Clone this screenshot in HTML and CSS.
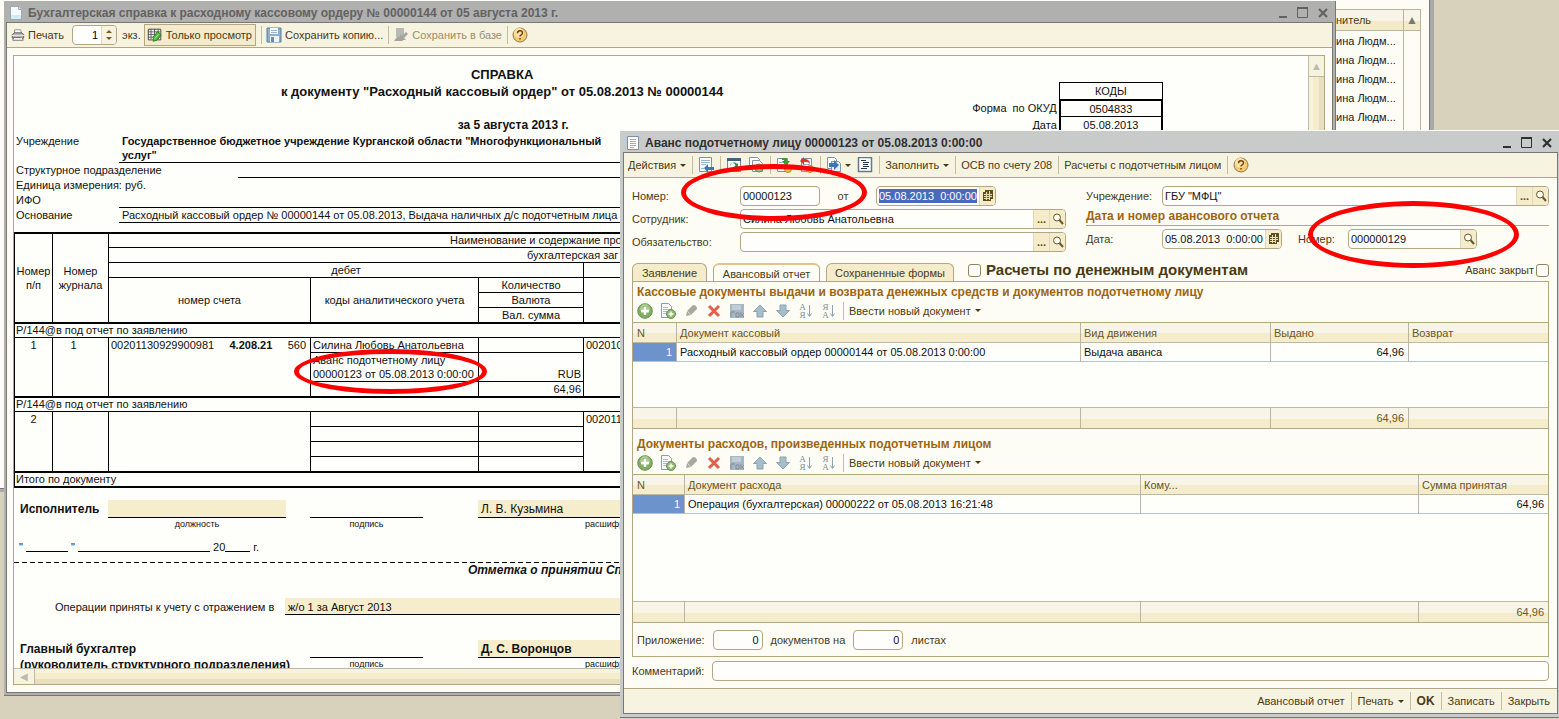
FILE: index.html
```html
<!DOCTYPE html>
<html lang="ru">
<head>
<meta charset="utf-8">
<title>Аванс подотчетному лицу</title>
<link rel="stylesheet" href="styles.css">
</head>
<body>
<svg class="defs" aria-hidden="true">
  <symbol id="i-max" viewBox="0 0 12 12"><path d="M.5 1.5h10v9H.5zM.5 1h10" fill="none" stroke="currentColor"/><path d="M0 0h11v2H0z" fill="currentColor"/></symbol>
  <symbol id="i-min" viewBox="0 0 12 12"><path d="M2 9h8v2H2z" fill="currentColor"/></symbol>
  <symbol id="i-close" viewBox="0 0 12 12"><path d="M2 2l8 8M10 2l-8 8" stroke="currentColor" stroke-width="2.2"/></symbol>
  <symbol id="i-page" viewBox="0 0 14 14"><path d="M1.500.5h8l3 3v10h-11z" fill="#f6fbff" stroke="#9aa9b8"/><path d="M9.500.5v3h3" fill="#dfe9f2" stroke="#9aa9b8"/><path d="M2 9h10v4H2z" fill="#d4eaf5"/></symbol>
  <symbol id="i-doc" viewBox="0 0 14 14"><path d="M1.500.5h11v13h-11z" fill="#fff" stroke="#7d8fa0"/><path d="M4 3.500h6M4 5.500h6M4 7.500h6M4 9.500h6M4 11.500h4" stroke="#8fb0cc"/></symbol>
  <symbol id="i-print" viewBox="0 0 16 16"><path d="M4 6V2h7l1 4" fill="#fff" stroke="#8a8a8a"/><path d="M1.500 7.500l2-2h9l2 2v4h-13z" fill="#b4b4b4" stroke="#555"/><path d="M1 8h14v1H1z" fill="#eee"/><path d="M3 11h10l1 3H2z" fill="#fff" stroke="#666"/><path d="M11 10h2v1h-2z" fill="#f0a020"/></symbol>
  <symbol id="i-grid" viewBox="0 0 18 16"><path d="M1.500 1.500h14v12h-14z" fill="#fff" stroke="#333"/><path d="M1 4.500h14M1 7.500h14M1 10.500h14M4.500 1v12M8.500 1v12M12.500 1v12" stroke="#555"/><path d="M7 10l5-6 4 4-5 6-4 1z" fill="#55b53c" stroke="#277a1c"/><path d="M8 13l5-6" stroke="#b5e69a"/></symbol>
  <symbol id="i-save" viewBox="0 0 16 16"><path d="M1 1h14v14H1z" fill="#8fb0cc" stroke="#5a7f9f"/><path d="M4 1h8v6H4z" fill="#f7f9fb"/><path d="M5 3.500h6M5 5.500h6" stroke="#9bb3c6"/><path d="M4 9h9v6H4z" fill="#eef3f6"/><path d="M5 10h3v5H5z" fill="#6f8ba3"/></symbol>
  <symbol id="i-base" viewBox="0 0 16 16"><path d="M3 1h8v9H3z" fill="#b8b8b4"/><path d="M1 14l3-4h4l2 4zM7 13V7l2 2 4-4 2 2-4 4 2 2z" fill="#a5a5a0"/></symbol>
  <symbol id="i-help" viewBox="0 0 16 16"><circle cx="8" cy="8" r="7" fill="#f6c96e" stroke="#8f7b52"/><circle cx="7" cy="6" r="5" fill="#fae1a6"/><path d="M5.500 6.200c0-3.200 5-3 5-.2 0 2-2.500 1.800-2.500 3.500M8 11v1.600" fill="none" stroke="#70450d" stroke-width="1.500"/></symbol>
  <symbol id="i-list" viewBox="0 0 16 16"><path d="M1.500.5h12v14h-12z" fill="#fff" stroke="#7d93a8"/><path d="M3 3.500h9M3 5.500h9M3 7.500h5M3 11.500h3" stroke="#9ab4c9"/><path d="M6 11l4-4v3h6v3h-6v3z" fill="#3d78b5"/></symbol>
  <symbol id="i-refresh" viewBox="0 0 16 16"><path d="M1.500 1.500h13v13h-13z" fill="#f4f8fa" stroke="#6f8497"/><path d="M1 1h14v3H1z" fill="#46637c"/><path d="M4 9a4 4 0 0 1 7-2l1-1v4H8l1.500-1.500A2.500 2.500 0 0 0 4 9z" fill="#3b8a3a"/></symbol>
  <symbol id="i-copy" viewBox="0 0 16 16"><path d="M1.500.5h8l2 2v10h-10z" fill="#fff" stroke="#8495a5"/><path d="M4.500 3.500h7l3 3v8h-10z" fill="#f1f6f9" stroke="#8495a5"/><circle cx="11" cy="11" r="4" fill="#9cc384" stroke="#64894d"/><path d="M11 9v4M9 11h4" stroke="#fff"/></symbol>
  <symbol id="i-post" viewBox="0 0 16 16"><path d="M1.500 1.500h10v13h-10z" fill="#fff" stroke="#7d93a8"/><path d="M3 5.500h7M3 7.500h7M3 9.500h4M3 11.500h4" stroke="#9ab4c9"/><path d="M6 1h5v3h3l-4 5-4-5h2V3H6z" fill="#3c9a35"/><circle cx="12" cy="12" r="3.500" fill="#f0bf48" stroke="#b98a27"/></symbol>
  <symbol id="i-unpost" viewBox="0 0 16 16"><path d="M3.500 1.500h10v13h-10z" fill="#fff" stroke="#7d93a8"/><path d="M5 7.500h7M5 9.500h4M5 11.500h4" stroke="#9ab4c9"/><path d="M2 4l4-4v2c4 0 6 2 6 5-1-2-3-2-6-2v3z" fill="#dd3426"/><circle cx="12" cy="12" r="3.500" fill="#f0bf48" stroke="#b98a27"/></symbol>
  <symbol id="i-go" viewBox="0 0 16 16"><path d="M1.500.5h7l2 2v9h-9z" fill="#fff" stroke="#7d93a8"/><path d="M5.500 4.500h7l2 2v8h-9z" fill="#e9f2f8" stroke="#7d93a8"/><path d="M3 6h5V3l5 5-5 5v-3H3z" fill="#3d78b5"/></symbol>
  <symbol id="i-struct" viewBox="0 0 16 16"><path d="M1.500.5h13v14h-13z" fill="#fff" stroke="#62788b" stroke-width="1.500"/><path d="M4 3.500h5M6 5.500h6M6 7.500h5M6 9.500h6M4 11.500h6" stroke="#26384a" stroke-width="1.200"/></symbol>
  <symbol id="i-add" viewBox="0 0 16 16"><circle cx="8" cy="8" r="7.300" fill="#7fae5e" stroke="#6f8e5c"/><circle cx="8" cy="6" r="5" fill="#a8ca8b"/><path d="M8 4v8M4 8h8" stroke="#fff" stroke-width="2.400"/></symbol>
  <symbol id="i-addcopy" viewBox="0 0 16 16"><path d="M1.500.5h7l3 3v11h-10z" fill="#fff" stroke="#8d9cab"/><path d="M3 4.500h5M3 6.500h7M3 8.500h4M3 10.500h3" stroke="#a9bccc"/><circle cx="11" cy="11" r="4.500" fill="#8dba6c" stroke="#6f8e5c"/><path d="M11 8.500v5M8.500 11h5" stroke="#fff" stroke-width="1.600"/></symbol>
  <symbol id="i-pen" viewBox="0 0 16 16"><path d="M3 13l1-5 6-6q4 0 4 4l-6 6z" fill="#aaa99c"/><path d="M4 8l4 4" stroke="#d8d6c8"/></symbol>
  <symbol id="i-del" viewBox="0 0 16 16"><path d="M3 3l10 10M13 3L3 13" stroke="#e0604c" stroke-width="3"/></symbol>
  <symbol id="i-end" viewBox="0 0 16 16"><path d="M1 1h14v14H1z" fill="#a7b8c4"/><path d="M3 2h9v5H3z" fill="#c0cdd6"/><path d="M2 14V9h4M7 14v-4h3v4zM12 9v5M15 10l-2 2 2 2" fill="none" stroke="#7f8d98"/></symbol>
  <symbol id="i-up" viewBox="0 0 16 16"><path d="M8 2l6.500 6.500H11V14H5V8.500H1.500z" fill="#a6bdca" stroke="#8ca3b1"/></symbol>
  <symbol id="i-down" viewBox="0 0 16 16"><path d="M8 14l6.500-6.500H11V2H5v5.500H1.500z" fill="#a6bdca" stroke="#8ca3b1"/></symbol>
  <symbol id="i-sortdown" viewBox="0 0 5 16"><path d="M2.500 2v11M.5 10.500l2 3 2-3" fill="none" stroke="#8ca3b1"/></symbol>
  <symbol id="i-glass" viewBox="0 0 12 12"><circle cx="5" cy="4.500" r="3.500" fill="#fffdf0" stroke="#6a5830"/><path d="M7.500 7l3.500 4" stroke="#6a5830" stroke-width="2"/></symbol>
  <symbol id="i-cal" viewBox="0 0 12 12"><path d="M3 0h8v9H9v2H1V2h2z" fill="#5d4c1e"/><path d="M2 4.500h8M2 6.500h8M2 8.500h6M4.500 2v8M7.500 1v9" stroke="#e9dfb4"/></symbol>
</svg>

<div class="desktop">

  <section class="list-window">
    <table class="people">
      <thead><tr><th>нитель</th><th class="people-scroll">▲</th></tr></thead>
      <tbody>
        <tr><td>ина Людм...</td><td></td></tr>
        <tr><td>ина Людм...</td><td></td></tr>
        <tr><td>ина Людм...</td><td></td></tr>
        <tr><td>ина Людм...</td><td></td></tr>
        <tr><td>ина Людм...</td><td></td></tr>
        <tr class="filler"><td></td><td></td></tr>
      </tbody>
    </table>
  </section>

  <section class="window report">
    <header class="titlebar">
      <svg class="ic14"><use href="#i-page"/></svg>
      <h1>Бухгалтерская справка к расходному кассовому ордеру № 00000144 от 05 августа 2013 г.</h1>
      <button aria-label="Свернуть"><svg class="ic12"><use href="#i-min"/></svg></button>
      <button aria-label="Развернуть"><svg class="ic12"><use href="#i-max"/></svg></button>
      <button aria-label="Закрыть"><svg class="ic12"><use href="#i-close"/></svg></button>
    </header>
    <div class="frame">
      <div class="toolbar report-bar">
        <button><svg class="ic14"><use href="#i-print"/></svg>Печать</button>
        <span class="spin"><input id="copies" value="1" aria-label="Количество экземпляров"><span class="arrows"><i class="tri-up"></i><i class="tri-down"></i></span></span>
        <label for="copies">экз.</label>
        <button class="pressed"><svg class="ic16"><use href="#i-grid"/></svg>Только просмотр</button>
        <i class="sep"></i>
        <button><svg class="ic16"><use href="#i-save"/></svg>Сохранить копию...</button>
        <i class="sep"></i>
        <button class="off"><svg class="ic16"><use href="#i-base"/></svg>Сохранить в базе</button>
        <i class="sep"></i>
        <button aria-label="Справка"><svg class="ic16"><use href="#i-help"/></svg></button>
      </div>
      <div class="viewer">
        <article class="sheet">
          <div class="sheet-head">
            <div class="sheet-title">
              <p>СПРАВКА</p>
              <p>к документу "Расходный кассовый ордер" от 05.08.2013 № 00000144</p>
              <p class="date-line">за 5 августа 2013 г.</p>
            </div>
            <table class="codes">
              <tr><td></td><td class="code top">КОДЫ</td></tr>
              <tr><td>Форма&nbsp; по ОКУД</td><td class="code first">0504833</td></tr>
              <tr><td>Дата</td><td class="code">05.08.2013</td></tr>
            </table>
          </div>
          <dl class="facts">
            <dt>Учреждение</dt><dd class="org line">Государственное бюджетное учреждение Курганской области "Многофункциональный<br>услуг"</dd>
            <dt class="wide">Структурное подразделение</dt><dd class="short line"></dd>
            <dt class="wide">Единица измерения: руб.</dt><dd class="short"></dd>
            <dt>ИФО</dt><dd class="line"></dd>
            <dt>Основание</dt><dd class="line">Расходный кассовый ордер № 00000144 от 05.08.2013, Выдача наличных д/с подотчетным лица</dd>
          </dl>
          <table class="entries">
            <colgroup><col class="e1"><col class="e2"><col class="e3"><col class="e4"><col class="e5"><col></colgroup>
            <tbody>
            <tr class="thick center"><td rowspan="6">Номер<br>п/п</td><td rowspan="6">Номер<br>журнала</td><td colspan="4" class="caption-a">Наименование и содержание про</td></tr>
            <tr><td colspan="4" class="caption-b">бухгалтерская заг</td></tr>
            <tr class="center"><td colspan="3">дебет</td><td></td></tr>
            <tr class="center"><td rowspan="3">номер счета</td><td rowspan="3">коды аналитического учета</td><td>Количество</td><td rowspan="3"></td></tr>
            <tr class="center"><td>Валюта</td></tr>
            <tr class="center"><td>Вал. сумма</td></tr>
            <tr class="thick"><td colspan="6">Р/144@в под отчет по заявлению</td></tr>
            <tr class="top"><td rowspan="3" class="mid">1</td><td rowspan="3" class="mid journal">1</td><td rowspan="3"><div class="account"><span>00201130929900981</span><b>4.208.21</b><span>560</span></div></td><td>Силина Любовь Анатольевна</td><td></td><td rowspan="3">002010</td></tr>
            <tr class="double"><td>Аванс подотчетному лицу<br>00000123 от 05.08.2013 0:00:00</td><td class="num">RUB</td></tr>
            <tr><td></td><td class="num">64,96</td></tr>
            <tr class="thick"><td colspan="6">Р/144@в под отчет по заявлению</td></tr>
            <tr class="top"><td rowspan="4" class="mid">2</td><td rowspan="4"></td><td rowspan="4"></td><td></td><td></td><td rowspan="4">002011</td></tr>
            <tr><td></td><td></td></tr>
            <tr><td></td><td></td></tr>
            <tr><td></td><td></td></tr>
            <tr class="thick last"><td colspan="6">Итого по документу</td></tr>
            </tbody>
          </table>
          <div class="sign">
            <strong>Исполнитель</strong><span class="fill post"></span><span class="rule"></span><span class="fill name">Л. В. Кузьмина</span>
            <small class="c-post">должность</small><small class="c-sign">подпись</small><small class="c-name">расшифр</small>
          </div>
          <p class="date-blank">"&nbsp;<span class="blank day"></span>&nbsp;"&nbsp;<span class="blank month"></span>&nbsp;20<span class="blank year"></span>&nbsp;г.</p>
          <p class="mark">Отметка о принятии Сп</p>
          <div class="accepted"><span>Операции приняты к учету с отражением в</span><span class="fill">ж/о 1 за Август 2013</span></div>
          <div class="sign chief">
            <strong class="span2">Главный бухгалтер</strong><span class="rule"></span><span class="fill name"><b>Д. С. Воронцов</b></span>
            <strong class="span2 unit">(руководитель структурного подразделения)</strong><small class="c-sign">подпись</small><small class="c-name">расшифр</small>
          </div>
        </article>
        <div class="vscroll"><span>▲</span></div>
        <div class="hscroll"><span>◀</span></div>
      </div>
    </div>
  </section>

  <section class="window advance">
    <header class="titlebar">
      <svg class="ic14"><use href="#i-doc"/></svg>
      <h2>Аванс подотчетному лицу 00000123 от 05.08.2013 0:00:00</h2>
      <button aria-label="Свернуть"><svg class="ic12"><use href="#i-min"/></svg></button>
      <button aria-label="Развернуть"><svg class="ic12"><use href="#i-max"/></svg></button>
      <button aria-label="Закрыть"><svg class="ic12"><use href="#i-close"/></svg></button>
    </header>
    <form class="frame">
      <div class="toolbar">
        <button type="button">Действия<i class="caret"></i></button>
        <i class="sep"></i>
        <button type="button" aria-label="Список"><svg class="ic16"><use href="#i-list"/></svg></button>
        <i class="sep"></i>
        <button type="button" aria-label="Обновить"><svg class="ic16"><use href="#i-refresh"/></svg></button>
        <button type="button" aria-label="Скопировать"><svg class="ic16"><use href="#i-copy"/></svg></button>
        <i class="sep"></i>
        <button type="button" aria-label="Провести"><svg class="ic16"><use href="#i-post"/></svg></button>
        <button type="button" aria-label="Отмена проведения"><svg class="ic16"><use href="#i-unpost"/></svg></button>
        <i class="sep"></i>
        <button type="button" aria-label="Перейти"><svg class="ic16"><use href="#i-go"/></svg><i class="caret tight"></i></button>
        <button type="button" aria-label="Структура"><svg class="ic16"><use href="#i-struct"/></svg></button>
        <i class="sep"></i>
        <button type="button">Заполнить<i class="caret"></i></button>
        <i class="sep"></i>
        <button type="button">ОСВ по счету 208</button>
        <i class="sep"></i>
        <button type="button">Расчеты с подотчетным лицом</button>
        <i class="sep"></i>
        <button type="button" aria-label="Справка"><svg class="ic16"><use href="#i-help"/></svg></button>
      </div>
      <div class="content">
        <div class="form">
          <div class="side-left">
            <label for="num">Номер:</label>
            <div class="line-fields">
              <span class="field number"><input id="num" value="00000123"></span>
              <label for="docdate">от</label>
              <span class="field date"><input id="docdate" class="selected" value="05.08.2013&nbsp; 0:00:00"><button type="button" aria-label="Календарь"><svg class="ic12"><use href="#i-cal"/></svg></button></span>
            </div>
            <label for="emp">Сотрудник:</label>
            <span class="field"><input id="emp" value="Силина Любовь Анатольевна"><button type="button">...</button><button type="button" aria-label="Открыть"><svg class="ic12"><use href="#i-glass"/></svg></button></span>
            <label for="duty">Обязательство:</label>
            <span class="field"><input id="duty"><button type="button">...</button><button type="button" aria-label="Открыть"><svg class="ic12"><use href="#i-glass"/></svg></button></span>
          </div>
          <div class="side-right">
            <label for="org">Учреждение:</label>
            <span class="field"><input id="org" value='ГБУ "МФЦ"'><button type="button">...</button><button type="button" aria-label="Открыть"><svg class="ic12"><use href="#i-glass"/></svg></button></span>
            <h3>Дата и номер авансового отчета</h3>
            <label for="repdate">Дата:</label>
            <div class="line-fields">
              <span class="field date"><input id="repdate" value="05.08.2013&nbsp; 0:00:00"><button type="button" aria-label="Календарь"><svg class="ic12"><use href="#i-cal"/></svg></button></span>
              <label for="repnum" class="rep-label">Номер:</label>
              <span class="field repnum"><input id="repnum" value="000000129"><button type="button" aria-label="Открыть"><svg class="ic12"><use href="#i-glass"/></svg></button></span>
            </div>
          </div>
        </div>
        <div class="tabs">
          <button type="button" class="tab t1">Заявление</button>
          <button type="button" class="tab t2 active">Авансовый отчет</button>
          <button type="button" class="tab t3">Сохраненные формы</button>
          <label class="money"><input type="checkbox">Расчеты по денежным документам</label>
          <label class="closed">Аванс закрыт<input type="checkbox"></label>
        </div>
        <div class="panel">
          <h3>Кассовые документы выдачи и возврата денежных средств и документов подотчетному лицу</h3>
          <div class="gridbar">
            <button type="button" aria-label="Добавить"><svg class="ic16"><use href="#i-add"/></svg></button>
            <button type="button" aria-label="Скопировать"><svg class="ic16"><use href="#i-addcopy"/></svg></button>
            <button type="button" aria-label="Изменить"><svg class="ic16"><use href="#i-pen"/></svg></button>
            <button type="button" aria-label="Удалить"><svg class="ic16"><use href="#i-del"/></svg></button>
            <button type="button" aria-label="Закончить"><svg class="ic16"><use href="#i-end"/></svg></button>
            <button type="button" aria-label="Вверх"><svg class="ic16"><use href="#i-up"/></svg></button>
            <button type="button" aria-label="Вниз"><svg class="ic16"><use href="#i-down"/></svg></button>
            <button type="button" class="sort"><span>А<br>Я</span><svg class="ic5"><use href="#i-sortdown"/></svg></button>
            <button type="button" class="sort"><span>Я<br>А</span><svg class="ic5"><use href="#i-sortdown"/></svg></button>
            <i class="sep"></i>
            <button type="button" class="enter">Ввести новый документ<i class="caret"></i></button>
          </div>
          <table class="data cash">
            <colgroup><col class="a1"><col><col class="a3"><col class="a4"><col class="a5"></colgroup>
            <thead><tr><th>N</th><th>Документ кассовый</th><th>Вид движения</th><th>Выдано</th><th>Возврат</th></tr></thead>
            <tbody>
              <tr><td class="cur">1</td><td>Расходный кассовый ордер 00000144 от 05.08.2013 0:00:00</td><td>Выдача аванса</td><td class="num">64,96</td><td></td></tr>
              <tr class="filler"><td colspan="5"></td></tr>
            </tbody>
            <tfoot><tr><td></td><td></td><td></td><td class="num">64,96</td><td></td></tr></tfoot>
          </table>
          <h3 class="second">Документы расходов, произведенных подотчетным лицом</h3>
          <div class="gridbar">
            <button type="button" aria-label="Добавить"><svg class="ic16"><use href="#i-add"/></svg></button>
            <button type="button" aria-label="Скопировать"><svg class="ic16"><use href="#i-addcopy"/></svg></button>
            <button type="button" aria-label="Изменить"><svg class="ic16"><use href="#i-pen"/></svg></button>
            <button type="button" aria-label="Удалить"><svg class="ic16"><use href="#i-del"/></svg></button>
            <button type="button" aria-label="Закончить"><svg class="ic16"><use href="#i-end"/></svg></button>
            <button type="button" aria-label="Вверх"><svg class="ic16"><use href="#i-up"/></svg></button>
            <button type="button" aria-label="Вниз"><svg class="ic16"><use href="#i-down"/></svg></button>
            <button type="button" class="sort"><span>А<br>Я</span><svg class="ic5"><use href="#i-sortdown"/></svg></button>
            <button type="button" class="sort"><span>Я<br>А</span><svg class="ic5"><use href="#i-sortdown"/></svg></button>
            <i class="sep"></i>
            <button type="button" class="enter">Ввести новый документ<i class="caret"></i></button>
          </div>
          <div class="grow">
            <table class="data spend">
              <colgroup><col class="b1"><col><col class="b3"><col class="b4"></colgroup>
              <thead><tr><th>N</th><th>Документ расхода</th><th>Кому...</th><th>Сумма принятая</th></tr></thead>
              <tbody>
                <tr><td class="cur">1</td><td>Операция (бухгалтерская) 00000222 от 05.08.2013 16:21:48</td><td></td><td class="num">64,96</td></tr>
                <tr class="filler"><td colspan="4"></td></tr>
              </tbody>
              <tfoot><tr><td></td><td></td><td></td><td class="num">64,96</td></tr></tfoot>
            </table>
          </div>
          <div class="attach">
            <label for="docs">Приложение:</label>
            <span class="field count"><input id="docs" value="0"></span>
            <label for="sheets">документов на</label>
            <span class="field count"><input id="sheets" value="0"></span>
            <span>листах</span>
          </div>
        </div>
        <div class="comment"><label for="note">Комментарий:</label><span class="field"><input id="note"></span></div>
      </div>
      <footer class="actions">
        <button type="button">Авансовый отчет</button><i class="sep"></i>
        <button type="button">Печать<i class="caret"></i></button><i class="sep"></i>
        <button type="submit" class="ok">OK</button><i class="sep"></i>
        <button type="button">Записать</button><i class="sep"></i>
        <button type="button">Закрыть</button>
      </footer>
    </form>
  </section>

  <div class="mark-ring ring-analytics"></div>
  <div class="mark-ring ring-number"></div>
  <div class="mark-ring ring-report"></div>
</div>
</body>
</html>
```
FILE: styles.css
```css
* { box-sizing: border-box; }
html, body { height: 100%; margin: 0; }
body { font: 11px/14px "Liberation Sans", Arial, sans-serif; color: #4a3a12; }
h1, h2, h3, p, dl, dd { margin: 0; }
button { font: inherit; color: inherit; border: 0; background: none; padding: 0; display: inline-flex; align-items: center; white-space: nowrap; }
input { font: inherit; }
.defs { display: none; }
.ic5 { width: 5px; height: 16px; }
.ic12 { width: 12px; height: 12px; }
.ic14 { width: 14px; height: 14px; }
.ic16 { width: 16px; height: 16px; }
svg { flex: none; display: block; }

.desktop { position: relative; height: 100%; overflow: hidden; background: #d8d2bc; }

/* List window behind */
.list-window { position: absolute; left: 0; top: 0; width: 1434px; height: 492px; background: #fdfdf6; border: solid #a9a9a7; border-width: 0 4px 3px 0; box-shadow: inset -1px -1px #777; padding: 9px 9px 0 1336px; }
.people { width: 100%; height: 100%; border-spacing: 0; table-layout: fixed; border: solid #b9b3a0; border-width: 1px 1px 0 0; }
.people th { height: 21px; padding: 0; text-align: left; font-weight: normal; background: linear-gradient(#f8f5e8 55%, #f3ebc8 55%); border-bottom: 1px solid #b9b3a0; }
.people th:last-child { width: 17px; text-align: center; color: #777; font-size: 12px; }
.people td { height: 19px; padding: 0; color: #222; }
.people th + th, .people td + td { border-left: 1px solid #b9b3a0; }
.people .filler td { height: auto; }

/* Window chrome */
.window { position: absolute; display: flex; flex-direction: column; }
.report { left: 4px; top: 1px; width: 1332px; bottom: 23px; background: #b0b0ae; border-right: 1px solid #777; border-bottom: 1px solid #777; padding: 0 2px 2px; }
.advance { left: 620px; right: 0; top: 130px; bottom: 2px; background: #c9cbca; border-top: 1px solid #fff; padding: 0 1px 3px 3px; box-shadow: 0 1px #777; }
.titlebar { display: flex; align-items: center; height: 21px; padding: 3px 4px 0 3px; gap: 8px; color: #626262; }
.advance .titlebar { color: #303030; padding: 3px 5px 0 3px; }
.titlebar h1, .titlebar h2 { flex: 1; font-size: 12px; line-height: 16px; font-weight: bold; white-space: nowrap; }
.titlebar svg { margin-right: 0; }
.titlebar > svg { margin-right: -3px; }
.frame { flex: 1; min-height: 0; display: flex; flex-direction: column; border: 1px solid #777; background: #fdfdf6; margin: 0; }
.toolbar { display: flex; align-items: center; height: 25px; flex: none; background: #f7f3e1; border-bottom: 1px solid #b3a683; padding: 0 4px; gap: 6px; }
.report-bar { gap: 5px; }
.report-bar button { gap: 3px; }
.sep { width: 1px; height: 18px; background: #c5bd9f; flex: none; margin-right: -1px; }
.caret { border: 3px solid transparent; border-top-color: currentColor; border-bottom: 0; margin-left: 4px; }
.caret.tight { margin-left: 3px; }
.report-bar .pressed { height: 22px; border: 1px solid #b3a683; background: #f3ebcb; padding: 0 3px 0 2px; }
.off { color: #9a8d66; }
.spin { display: flex; width: 45px; height: 20px; margin-left: 3px; border: 1px solid #b3a683; border-radius: 4px; background: #fff; overflow: hidden; }
.spin input { width: 28px; border: 0; padding: 0 3px 0 0; text-align: right; background: none; }
.spin + label { margin-right: -2px; }
.arrows { flex: 1; display: flex; flex-direction: column; gap: 4px; align-items: center; justify-content: center; background: #f7f3e1; border-left: 1px solid #e5dcb8; }
.tri-up, .tri-down { border: 3px solid transparent; }
.tri-up { border-top: 0; border-bottom-color: #7a5a18; }
.tri-down { border-bottom: 0; border-top-color: #7a5a18; }

/* Report viewer */
.viewer { flex: 1; min-height: 0; margin: 7px 7px 7px 6px; border: 1px solid #b3a683; display: grid; grid-template: minmax(0, 1fr) 16px / minmax(0, 1fr) 16px; background: #fff; }
.sheet { overflow: hidden; background: #fefefa; color: #111; }
.vscroll { border-left: 1px solid #c0b99f; background: linear-gradient(90deg, #f7f3e1 30%, #f4ecca 30% 70%, #e9dfc0 70%); }
.vscroll span, .hscroll span { display: grid; place-items: center; color: #bcb9ae; background: #f7f3e1; }
.vscroll span { height: 21px; border-bottom: 1px solid #c0b99f; }
.hscroll { border-top: 1px solid #c0b99f; background: linear-gradient(#f7f3e1 30%, #f4ecca 30% 70%, #e9dfc0 70%); }
.hscroll span { width: 21px; height: 15px; border-right: 1px solid #c0b99f; font-size: 10px; }
.sheet-head { display: flex; height: 78px; }
.sheet-title { width: 940px; margin-left: 20px; padding-top: 10px; text-align: center; font-size: 13px; line-height: 17px; font-weight: bold; }
.date-line { margin-top: 17px; padding-left: 22px; font-size: 12px; }
.codes { margin: 26px 145px 0 auto; border-spacing: 0; align-self: flex-start; }
.codes td { height: 17px; padding: 0 2px; text-align: right; line-height: 14px; white-space: nowrap; }
.codes .code { width: 105px; text-align: center; border: solid #000; border-width: 1px 2px 0; }
.codes .code.top { border-width: 1px 1px 0; }
.codes .code.first { border-top-width: 2px; }
.facts { display: grid; grid-template-columns: 105px 119px 1fr; }
.facts dt { padding-left: 2px; line-height: 14px; height: 15px; white-space: nowrap; }
.facts dt.wide { grid-column: span 2; }
.facts dd { grid-column: span 2; padding-left: 3px; line-height: 14px; height: 15px; white-space: nowrap; }
.facts dd.short { grid-column: span 1; }
.facts dd.org { height: 29px; font-weight: bold; }
.facts .line { border-bottom: 1px solid #000; }
.entries { width: 100%; margin-top: 9px; table-layout: fixed; border-spacing: 0; border-left: 1px solid #000; border-bottom: 2px solid #000; }
.e1 { width: 37px; } .e2 { width: 56px; } .e3 { width: 202px; } .e4 { width: 168px; } .e5 { width: 105px; }
.entries td { height: 15px; padding: 0 2px; line-height: 13px; border: solid #000; border-width: 1px 0 0 1px; white-space: nowrap; }
.entries td:first-child[rowspan="6"], .entries td.mid:first-child, .entries td[colspan="6"] { border-left: 0; }
.entries td[colspan="6"] { padding-left: 1px; }
.entries .thick td { border-top-width: 2px; }
.entries .center td { text-align: center; padding: 0 1px; }
.entries .center td[rowspan="6"] { line-height: 14px; }
.entries .center td.caption-a { text-align: left; padding-left: 341px; }
.entries td.caption-b { padding-left: 418px; }
.entries .top td { vertical-align: top; padding-top: 1px; }
.entries td.mid { text-align: center; }
.entries td.journal { padding-right: 16px; }
.entries .double td { height: 29px; line-height: 14px; }
.entries .double .num { vertical-align: bottom; }
.entries .num { text-align: right; }
.account { display: flex; justify-content: space-between; padding-right: 2px; }
.sign { display: grid; grid-template-columns: 94px 178px 24px 113px 55px 1fr; padding-top: 12px; }
.sign strong { font-size: 12px; line-height: 18px; padding-left: 6px; white-space: nowrap; }
.sign .span2 { grid-column: 1 / 3; }
.sign .unit { line-height: 14px; }
.fill { background: #f5edcb; border-bottom: 1px solid #000; height: 18px; line-height: 19px; padding-left: 3px; font-size: 12px; }
.post { grid-column: 2; }
.rule { grid-column: 4; border-bottom: 1px solid #000; height: 18px; }
.name { grid-column: 6; }
.sign small { font-size: 9px; line-height: 12px; text-align: center; }
.c-post { grid-column: 2; }
.c-sign { grid-column: 4; }
.sign .c-name { grid-column: 6; text-align: left; padding-left: 107px; }
.date-blank { display: flex; margin-top: 10px; padding-left: 5px; height: 22px; }
.blank { border-bottom: 1px solid #000; height: 12px; }
.day { width: 42px; } .month { width: 132px; } .year { width: 25px; }
.mark { padding-left: 454px; background: repeating-linear-gradient(90deg, #000 0 5px, transparent 5px 8px) 0 0 / 100% 1px no-repeat; font-size: 12px; line-height: 17px; font-weight: bold; font-style: italic; white-space: nowrap; }
.accepted { display: grid; grid-template-columns: 271px 1fr; padding-top: 19px; line-height: 19px; }
.accepted > span:first-child { padding-left: 41px; white-space: nowrap; }
.accepted .fill { height: 17px; font-size: 11px; }
.chief { padding-top: 23px; }

/* Advance form */
.content { flex: 1; min-height: 0; display: flex; flex-direction: column; padding: 8px 8px 7px; }
.form { display: grid; grid-template-columns: 434px 1fr; gap: 20px; margin-bottom: 11px; }
.side-left { display: grid; grid-template-columns: 108px 1fr; gap: 3px 0; align-items: center; align-content: start; }
.side-right { display: grid; grid-template-columns: 76px 1fr; gap: 3px 0; align-items: center; align-content: start; }
.line-fields { display: flex; align-items: center; }
.field { display: flex; height: 20px; border: 1px solid #b3a683; border-radius: 4px; background: #fefefc; overflow: hidden; }
.field input { flex: 1; min-width: 0; border: 0; padding: 0 0 0 2px; background: none; color: #111; outline: 0; }
.field button { width: 16px; justify-content: center; background: #f4ecca; border-left: 1px solid #e3d9b4; color: #5d4c1e; flex: none; font-weight: bold; }
.number { width: 80px; }
.number + label { width: 56px; text-align: center; padding-right: 10px; }
.date { width: 120px; }
.field input.selected { background: #4a69bd; color: #fff; margin: 2px 2px 2px 2px; padding: 0; }
.rep-label { width: 66px; padding-left: 16px; }
.repnum { width: 129px; }
h3 { color: #9c6510; font-size: 12px; line-height: 14px; }
.side-right h3 { grid-column: 1 / -1; height: 17px; border-bottom: 1px solid #b3a683; }
.tabs { display: flex; height: 18px; gap: 6px; align-items: flex-end; }
.tab { height: 18px; justify-content: center; border: 1px solid #b3a683; border-bottom: 0; border-radius: 6px 6px 0 0; background: #f4ecca; }
.tab.active { height: 19px; margin-bottom: -1px; background: #fdfdf6; border-top: 2px solid #e2c48b; }
.t1 { width: 75px; } .t2 { width: 107px; } .t3 { width: 128px; }
.tabs label { display: flex; align-items: center; height: 22px; white-space: nowrap; }
.money { font-size: 15px; font-weight: bold; gap: 5px; padding-left: 8px; }
.closed { margin-left: auto; gap: 2px; }
input[type="checkbox"] { appearance: none; width: 13px; height: 13px; margin: 0; border: 1px solid #8f8360; border-radius: 3px; background: #fff; }
.panel { flex: 1; min-height: 0; display: flex; flex-direction: column; border: 1px solid #b3a683; }
.panel h3 { padding: 3px 4px 0; white-space: nowrap; }
.panel h3.second { padding-top: 8px; }
.gridbar { display: flex; align-items: center; gap: 7px; height: 23px; flex: none; padding-left: 4px; }
.gridbar .sep { margin: 0 -2px 0 -1px; }
.sort { width: 16px; }
.sort span { font: 9px/8px "Liberation Serif", serif; color: #7c8c96; width: 9px; }
.data { width: 100%; flex: none; border-spacing: 0; table-layout: fixed; border: solid #b3a683; border-width: 1px 0; background: #fefefb; }
.cash { height: 107px; }
.grow { flex: 1; min-height: 0; }
.spend { height: 100%; }
.a1 { width: 43px; } .a3 { width: 190px; } .a4 { width: 138px; } .a5 { width: 140px; }
.b1 { width: 51px; } .b3 { width: 278px; } .b4 { width: 130px; }
.data th { height: 20px; padding: 0 4px; text-align: left; font-weight: normal; color: #6b5626; }
.data th, .data tfoot td { background: linear-gradient(#f8f5e8 55%, #f4ecca 55%); }
.data th { border-bottom: 1px solid #c0b99f; }
.data td { height: 19px; padding: 0 4px; color: #111; border-bottom: 1px solid #b5c3cf; white-space: nowrap; }
.data th + th, .data td + td { border-left: 1px solid #b8b4a6; padding-left: 3px; }
.data .filler td { height: auto; border: 0; }
.data tfoot td { height: 21px; border-top: 1px solid #c0b99f; border-bottom: 0; color: #6b5626; }
.data .cur { background: #6d93cd; color: #fff; text-align: right; }
.data .num { text-align: right; }
.attach { display: flex; align-items: center; flex: none; height: 33px; padding-left: 4px; gap: 8px; }
.count { width: 50px; }
.count input { text-align: right; padding-right: 3px; }
.comment { display: grid; grid-template-columns: 80px 1fr; align-items: center; margin-top: 4px; }
.actions { display: flex; align-items: center; justify-content: flex-end; gap: 7px; height: 25px; flex: none; padding-right: 7px; background: #f7f3e1; border-top: 1px solid #b3a683; }
.actions .sep { margin: 0 -1px; }
.ok { font-weight: bold; font-size: 12px; }

/* Highlight rings */
.mark-ring { position: absolute; border: 5px solid #f00; border-radius: 50%; pointer-events: none; }
.ring-analytics { left: 294px; top: 349px; width: 193px; height: 45px; }
.ring-number { left: 681px; top: 164px; width: 186px; height: 57px; }
.ring-report { left: 1308px; top: 201px; width: 211px; height: 67px; }
```
